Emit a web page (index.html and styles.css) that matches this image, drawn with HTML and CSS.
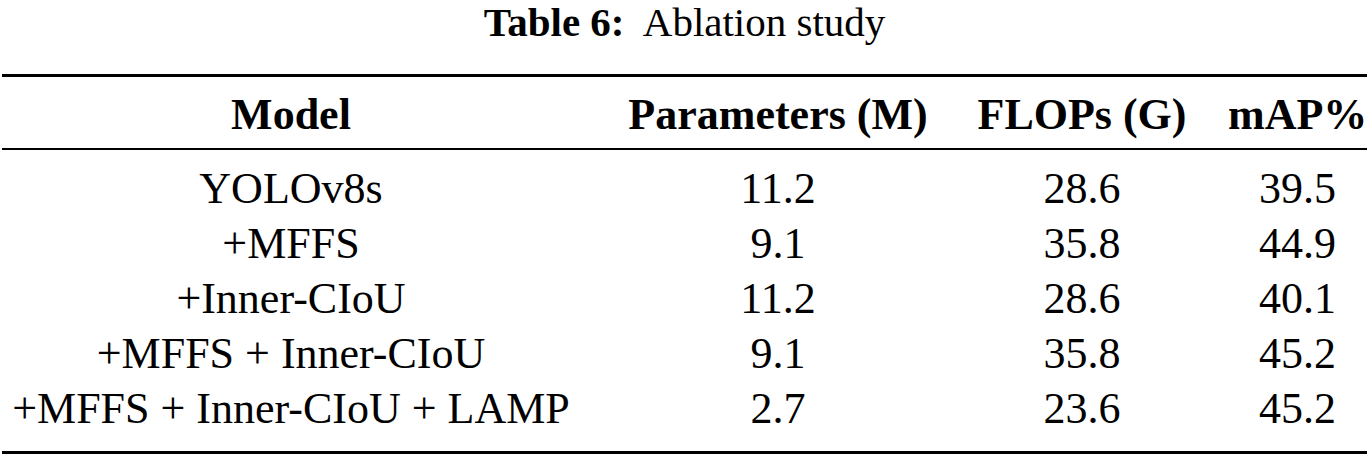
FILE: index.html
```html
<!DOCTYPE html>
<html lang="en">
<head>
    <meta charset="UTF-8">
    <title>Table 6: Ablation study</title>
    <link rel="stylesheet" href="styles.css">
</head>
<body>
    <div id="table-wrap">
        <div class="caption"><b>Table 6:</b>&nbsp; Ablation study</div>

        <table class="ablation">
            <colgroup>
                <col class="col-model">
                <col class="col-params">
                <col class="col-flops">
                <col class="col-map">
            </colgroup>
            <thead>
                <tr>
                    <th>Model</th>
                    <th>Parameters (M)</th>
                    <th>FLOPs (G)</th>
                    <th class="map">mAP%</th>
                </tr>
            </thead>
            <tbody>
                <tr>
                    <td>YOLOv8s</td>
                    <td>11.2</td>
                    <td>28.6</td>
                    <td class="map">39.5</td>
                </tr>
                <tr>
                    <td>+MFFS</td>
                    <td>9.1</td>
                    <td>35.8</td>
                    <td class="map">44.9</td>
                </tr>
                <tr>
                    <td>+Inner-CIoU</td>
                    <td>11.2</td>
                    <td>28.6</td>
                    <td class="map">40.1</td>
                </tr>
                <tr>
                    <td>+MFFS + Inner-CIoU</td>
                    <td>9.1</td>
                    <td>35.8</td>
                    <td class="map">45.2</td>
                </tr>
                <tr>
                    <td>+MFFS + Inner-CIoU + LAMP</td>
                    <td>2.7</td>
                    <td>23.6</td>
                    <td class="map">45.2</td>
                </tr>
            </tbody>
        </table>
    </div>
</body>
</html>
```

FILE: styles.css
```css
body {
    margin: 0;
    background-color: white;
    color: #000;
    font-family: 'Liberation Serif', 'Times New Roman', serif;
}

#table-wrap {
    padding: 0 2px;
}

.caption {
    text-align: center;
    font-size: 41px;
    line-height: 44px;
    margin-bottom: 30px;
    white-space: pre;
}

.ablation {
    width: 100%;
    table-layout: fixed;
    border-collapse: collapse;
    font-size: 44px;
    white-space: nowrap;
}

.col-model {
    width: 578px;
}

.col-params {
    width: 396px;
}

.col-flops {
    width: 212px;
}

.ablation thead tr {
    border-top: 3px solid #000;
    border-bottom: 2px solid #000;
}

.ablation tbody {
    border-bottom: 3px solid #000;
}

.ablation th,
.ablation td {
    padding: 0;
    text-align: center;
    overflow: visible;
}

.ablation th {
    line-height: 50px;
    padding: 13px 0 8px;
    font-weight: bold;
}

.ablation td {
    height: 55px;
    line-height: 55px;
}

.ablation tbody tr:first-child td {
    padding-top: 11px;
}

.ablation tbody tr:last-child td {
    padding-bottom: 15px;
}

.ablation .map {
    padding-left: 40px;
}
```
